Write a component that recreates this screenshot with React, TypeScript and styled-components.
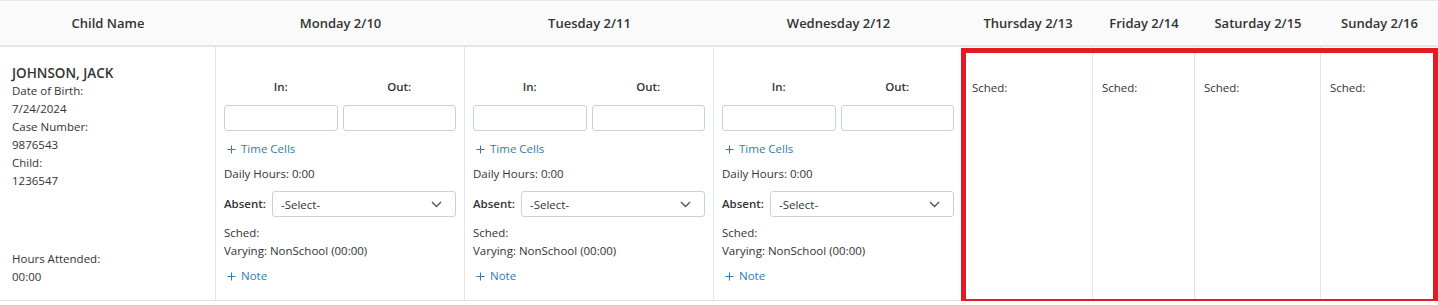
import React from "react";
import styled, { createGlobalStyle } from "styled-components";

const GlobalStyle = createGlobalStyle`
  html, body {
    margin: 0;
    padding: 0;
    background: #fff;
  }
  body {
    font-family: "Open Sans", "Noto Sans", Arial, sans-serif;
    color: #333;
  }
`;

type Day = { label: string; editable: boolean };

const days: Day[] = [
  { label: "Monday 2/10", editable: true },
  { label: "Tuesday 2/11", editable: true },
  { label: "Wednesday 2/12", editable: true },
  { label: "Thursday 2/13", editable: false },
  { label: "Friday 2/14", editable: false },
  { label: "Saturday 2/15", editable: false },
  { label: "Sunday 2/16", editable: false },
];

const PlusIcon = () => (
  <svg width="9" height="9" viewBox="0 0 9 9">
    <path d="M4.5 0.5v8M0.5 4.5h8" stroke="currentColor" strokeWidth="1" fill="none" />
  </svg>
);

const Chevron = () => (
  <svg width="11" height="7" viewBox="0 0 11 7">
    <path d="M1 1l4.5 4.5L10 1" stroke="#555" strokeWidth="1.4" fill="none" />
  </svg>
);

const App: React.FC = () => {
  return (
    <>
      <GlobalStyle />
      <Grid>
        <HeadCell>Child Name</HeadCell>
        {days.map((d) => (
          <HeadCell key={d.label}>{d.label}</HeadCell>
        ))}

        <ChildCell $col={1}>
          <div>
            <ChildName>JOHNSON, JACK</ChildName>
            <Line>Date of Birth:</Line>
            <Line>7/24/2024</Line>
            <Line>Case Number:</Line>
            <Line>9876543</Line>
            <Line>Child:</Line>
            <Line>1236547</Line>
          </div>
          <div>
            <Line>Hours Attended:</Line>
            <Line>00:00</Line>
          </div>
        </ChildCell>

        {days.map((d, i) =>
          d.editable ? (
            <DayCell key={d.label} $col={i + 2}>
              <TimeLabels>
                <BoldLabel>In:</BoldLabel>
                <BoldLabel>Out:</BoldLabel>
              </TimeLabels>
              <TimeInputs>
                <TimeInput type="text" />
                <TimeInput type="text" />
              </TimeInputs>
              <LinkLine $mt={9}>
                <PlusIcon />
                Time Cells
              </LinkLine>
              <Line $mt={7}>Daily Hours: 0:00</Line>
              <AbsentRow>
                <BoldLabel>Absent:</BoldLabel>
                <SelectBox>
                  <span>-Select-</span>
                  <Chevron />
                </SelectBox>
              </AbsentRow>
              <Line $mt={7}>Sched:</Line>
              <Line>Varying: NonSchool (00:00)</Line>
              <LinkLine $mt={7}>
                <PlusIcon />
                Note
              </LinkLine>
            </DayCell>
          ) : (
            <EmptyDayCell key={d.label} $col={i + 2} $last={i === days.length - 1}>
              <Line>Sched:</Line>
            </EmptyDayCell>
          )
        )}

        <Highlight />
      </Grid>
    </>
  );
};

const Grid = styled.div`
  display: grid;
  grid-template-columns: 216px 249px 249px 249px 130px 102px 126px 117px;
  grid-template-rows: 46px 254px;
  border-top: 1px solid #e6e8eb;
  width: 1438px;
`;

const HeadCell = styled.div`
  grid-row: 1;
  background: #fafafa;
  border-bottom: 2px solid #e4e7ea;
  display: flex;
  align-items: center;
  justify-content: center;
  font-size: 13px;
  font-weight: 600;
  color: #333;
  white-space: nowrap;
`;

const BodyCell = styled.div<{ $col: number; $last?: boolean }>`
  grid-row: 2;
  grid-column: ${(p) => p.$col};
  border-right: ${(p) => (p.$last ? "none" : "1px solid #e1e4e8")};
  border-bottom: 1px solid #e1e4e8;
  font-size: 11.5px;
  min-width: 0;
`;

const ChildCell = styled(BodyCell)`
  display: flex;
  flex-direction: column;
  justify-content: space-between;
  padding: 17px 12px 14px;
`;

const ChildName = styled.div`
  font-size: 13.5px;
  font-weight: 600;
  line-height: 18px;
  color: #333;
`;

const Line = styled.div<{ $mt?: number }>`
  line-height: 18px;
  margin-top: ${(p) => p.$mt ?? 0}px;
  white-space: nowrap;
`;

const DayCell = styled(BodyCell)`
  display: flex;
  flex-direction: column;
  padding: 31px 8px 0;
`;

const EmptyDayCell = styled(BodyCell)`
  padding: 32px 9px 0;
`;

const TimeLabels = styled.div`
  display: grid;
  grid-template-columns: 1fr 1fr;
  gap: 5px;
  text-align: center;
  line-height: 18px;
`;

const BoldLabel = styled.span`
  font-weight: 600;
  line-height: 18px;
`;

const TimeInputs = styled.div`
  display: grid;
  grid-template-columns: 1fr 1fr;
  gap: 5px;
  margin-top: 9px;
`;

const TimeInput = styled.input`
  box-sizing: border-box;
  width: 100%;
  height: 26px;
  border: 1px solid #ccd1d6;
  border-radius: 3px;
  background: #fff;
  padding: 0 6px;
  font: inherit;
`;

const LinkLine = styled.div<{ $mt?: number }>`
  display: flex;
  align-items: center;
  gap: 5px;
  line-height: 18px;
  margin-top: ${(p) => p.$mt ?? 0}px;
  padding-left: 3px;
  color: #2e7bb6;
`;

const AbsentRow = styled.div`
  display: flex;
  align-items: center;
  gap: 6px;
  margin-top: 8px;
`;

const SelectBox = styled.div`
  flex: 1;
  box-sizing: border-box;
  height: 26px;
  border: 1px solid #ccd1d6;
  border-radius: 3px;
  display: flex;
  align-items: center;
  justify-content: space-between;
  padding: 0 13px 0 8px;
  color: #333;
`;

const Highlight = styled.div`
  grid-row: 2;
  grid-column: 5 / -1;
  margin: 1px 0 -3px -2px;
  border: 5px solid #e31c23;
  pointer-events: none;
`;

export default App;
